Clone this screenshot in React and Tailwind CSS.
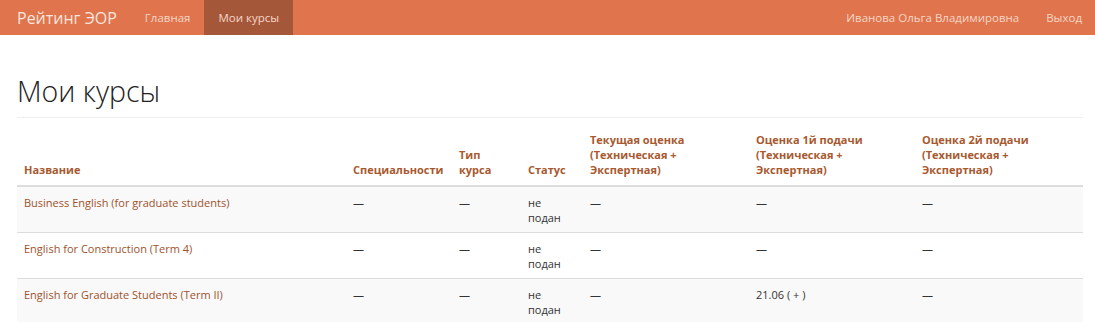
const rows = [
  { name: 'Business English (for graduate students)', first: '—' },
  { name: 'English for Construction (Term 4)', first: '—' },
  { name: 'English for Graduate Students (Term II)', first: '21.06 ( + )' },
];

const cols = [
  { label: ['Название'], w: 'w-[329px]' },
  { label: ['Специальности'], w: 'w-[106px]' },
  { label: ['Тип', 'курса'], w: 'w-[69px]' },
  { label: ['Статус'], w: 'w-[62px]' },
  { label: ['Текущая оценка', '(Техническая +', 'Экспертная)'], w: 'w-[166px]' },
  { label: ['Оценка 1й подачи', '(Техническая +', 'Экспертная)'], w: 'w-[166px]' },
  { label: ['Оценка 2й подачи', '(Техническая +', 'Экспертная)'], w: 'w-[168px]' },
];

export default function App() {
  return (
    <div className="min-h-[322px] bg-white font-['Open_Sans',sans-serif] text-[#333]">
      {/* Navbar */}
      <div className="h-[35px] bg-[#e0744c] flex items-stretch px-[17px]">
        <div className="flex items-center text-[16px] text-[#f7e6de] mr-[14px]">Рейтинг ЭОР</div>
        <div className="flex items-center px-[14px] text-[11.5px] text-[#f5d6c8]">Главная</div>
        <div className="flex items-center px-[14px] text-[11.5px] text-[#f5d6c8] bg-[#a5573a]">Мои курсы</div>
        <div className="flex-1" />
        <div className="flex items-center text-[11.5px] text-[#f5d6c8] mr-[27px]">Иванова Ольга Владимировна</div>
        <div className="flex items-center text-[11.5px] text-[#f5d6c8] mr-[-4px]">Выход</div>
      </div>

      <div className="ml-[17px] w-[1066px]">
        <h1 className="pt-[38px] pb-[8px] text-[28.5px] leading-[36px] font-light text-[#222] border-b border-[#eee]">
          Мои курсы
        </h1>

        <table className="mt-[6px] w-full border-collapse text-[11px] leading-[15px] table-fixed">
          <thead>
            <tr className="border-b-2 border-[#ddd]">
              {cols.map((c, i) => (
                <th key={i} className={`${c.w} px-[7px] py-[8px] text-left align-bottom font-bold text-[#a8592f]`}>
                  {c.label.map((l, j) => (
                    <div key={j}>{l}</div>
                  ))}
                </th>
              ))}
            </tr>
          </thead>
          <tbody>
            {rows.map((r, i) => (
              <tr key={i} className={`border-t border-[#ddd] ${i % 2 === 0 ? 'bg-[#f9f9f9]' : 'bg-white'}`}>
                <td className="px-[7px] pt-[8px] pb-[7px] align-top text-[#a0522d]">{r.name}</td>
                <td className="px-[7px] pt-[8px] pb-[7px] align-top">—</td>
                <td className="px-[7px] pt-[8px] pb-[7px] align-top">—</td>
                <td className="px-[7px] pt-[8px] pb-[7px] align-top">
                  <div>не</div>
                  <div>подан</div>
                </td>
                <td className="px-[7px] pt-[8px] pb-[7px] align-top">—</td>
                <td className="px-[7px] pt-[8px] pb-[7px] align-top">{r.first}</td>
                <td className="px-[7px] pt-[8px] pb-[7px] align-top">—</td>
              </tr>
            ))}
          </tbody>
        </table>
      </div>
    </div>
  );
}
